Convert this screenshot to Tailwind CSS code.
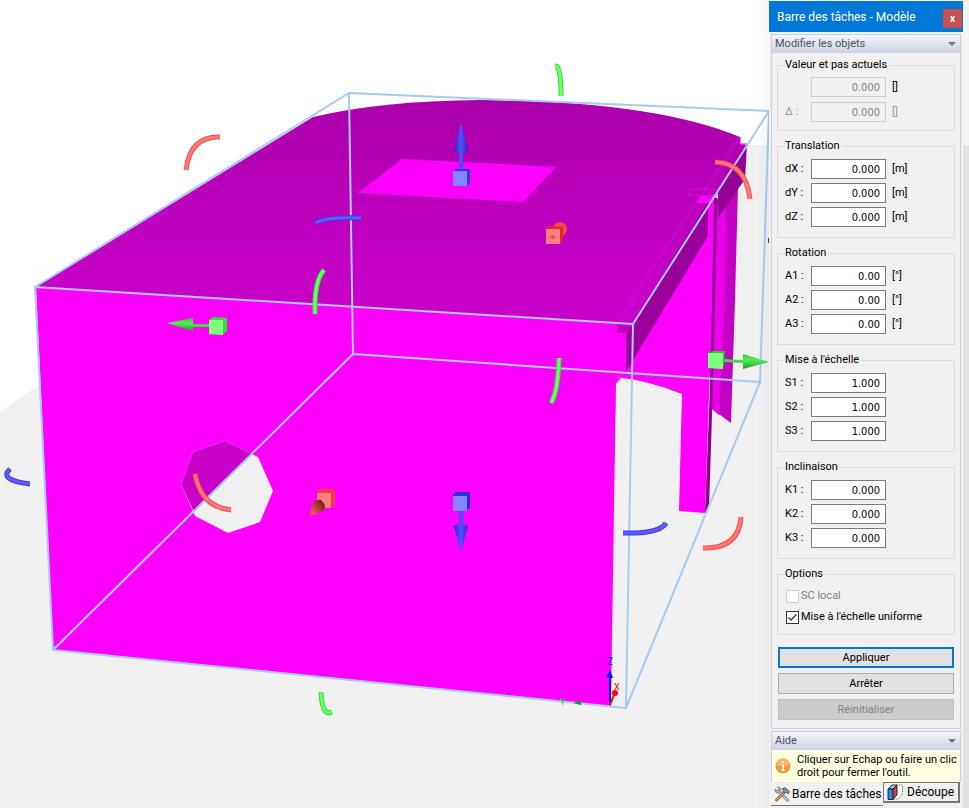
<!DOCTYPE html>
<html lang="fr">
<head>
    <meta charset="UTF-8">
    <meta name="viewport" content="width=device-width, initial-scale=1.0">
    <title>Barre des tâches - Modèle</title>
    <script src="https://cdn.jsdelivr.net/npm/@tailwindcss/browser@4"></script>
</head>
<body class="flex min-h-screen bg-white text-black text-[11px] leading-[14px] font-[Roboto,'Liberation_Sans',sans-serif]">

    <!-- 3D view -->
    <main class="flex-1 min-w-0">
        <svg class="block w-full h-auto" viewBox="0 0 769 808" role="img" aria-label="Vue 3D du modèle">
            <defs>
                <linearGradient id="roof" x1="0" y1="100" x2="0" y2="325" gradientUnits="userSpaceOnUse">
                    <stop offset="0" stop-color="#aa00aa"/>
                    <stop offset="0.5" stop-color="#bd00bd"/>
                    <stop offset="1" stop-color="#cb00cb"/>
                </linearGradient>
                <linearGradient id="edge" x1="0" x2="1">
                    <stop offset="0" stop-color="#000" stop-opacity="0"/>
                    <stop offset="1" stop-color="#000" stop-opacity="0.03"/>
                </linearGradient>
                <linearGradient id="blue" x1="0" x2="1">
                    <stop offset="0" stop-color="#2a2ac0"/>
                    <stop offset="0.5" stop-color="#5050ff"/>
                    <stop offset="1" stop-color="#2828c8"/>
                </linearGradient>
                <linearGradient id="green" x1="0" y1="0" x2="0" y2="1">
                    <stop offset="0" stop-color="#2acc2a"/>
                    <stop offset="0.4" stop-color="#55ee55"/>
                    <stop offset="1" stop-color="#22a022"/>
                </linearGradient>
                <linearGradient id="brown" x1="0" y1="1" x2="1" y2="0">
                    <stop offset="0.2" stop-color="#e05a50"/>
                    <stop offset="0.9" stop-color="#7a1a1a"/>
                </linearGradient>
            </defs>

            <!-- ground -->
            <path d="M0 412L60 370L700 145H769V808H0Z" fill="#f0f0f0"/>
            <path d="M0 300V412L345 170V90L36 287Z" fill="#fff"/>

            <!-- right side parts -->
            <path d="M735 160L740 160L738 187L735 300L731 423L712 409L700 240Z" fill="#c400c4"/>
            <path d="M717 200L726 190L725 300L719 415L712 409Z" fill="#ec00ec"/>
            <path d="M700 205L716 190L705 513L679 511L682 394Q650 381 616 377L611 600L600 400L627 372Z" fill="#f0f"/>
            <path d="M714 198H717.5L712 415L709 508L705 513L711 360Z" fill="#8c008c"/>

            <!-- front wall -->
            <path d="M36 287L633 324L633 378L616 377L611 706L53 650Z" fill="#f0f"/>

            <!-- roof -->
            <path d="M36 287L313 117Q380 101 480 100Q655 101 740 137L740 144L747 145L633 324Z" fill="url(#roof)"/>
            <path d="M747 145L745 179L718 218V190Z" fill="#940094"/>
            <path d="M708 202V236L626 372V334L633 324Z" fill="#9a009a"/>
            <path d="M617 323L633 324L626 333L617 333Z" fill="#c000c0"/>
            <path d="M702 195H716L711 203L696 203Z" fill="#f0f"/>
            <path d="M740 137V144H747M740 137L617 322M688 195L692 189L719 190L716 196Z" fill="none" stroke="#e600e6"/>
            <path d="M402 159L556 167L523 202L358 193Z" fill="#f0f"/>

            <!-- opening in the wall -->
            <path d="M225 441L258 457L273 491L260 522L228 533L195 516L181 484L193 452Z" fill="#f0f0f0"/>
            <path d="M225 441L252 454L194 512L181 484L193 452Z" fill="#c800c8"/>

            <!-- bounding box -->
            <path d="M35 287L349 93L769 111L760 382L626 708L53 650Z M35 287L633 324L626 708M633 324L769 111M349 93L353 354L53 650M353 354L760 382" fill="none" stroke="#a6caf0" stroke-width="2" stroke-linejoin="round"/>

            <!-- rotation handles -->
            <g fill="none" stroke-width="5">
                <path d="M186 170Q190 136 220 137M715 162Q746 163 750 199M195 474Q201 507 231 510M703 548Q739 549 741 517" stroke="#f05050"/>
                <path d="M186 170Q190 136 220 137M715 162Q746 163 750 199M195 474Q201 507 231 510M703 548Q739 549 741 517" stroke="#ff7878" stroke-width="3"/>
                <path d="M555 66Q561 65 561 96M324 270Q314 281 315 314M559 358Q558 392 551 403M321 692Q322 717 332 712" stroke="#3ddd3d"/>
                <path d="M555 66Q561 65 561 96M324 270Q314 281 315 314M559 358Q558 392 551 403M321 692Q322 717 332 712" stroke="#66ff66" stroke-width="3"/>
                <path d="M316 223Q324 217 361 218M10 469Q-2 480 30 484M623 533Q660 534 666 523" stroke="#3a3ad8"/>
                <path d="M316 223Q324 217 361 218M10 469Q-2 480 30 484M623 533Q660 534 666 523" stroke="#5c5cff" stroke-width="3"/>
            </g>
            <path d="M768 238h1v5h-1z" fill="#3333dd"/>

            <!-- translation and scale handles -->
            <path d="M459 150h4v22h-4zM461 123L468 151Q461 154 454 151Z" fill="url(#blue)"/>
            <path d="M453 171L456 169H470V183L467 186H453Z" fill="#3838dd"/>
            <path d="M453 171H467V186H453Z" fill="#8484ff"/>
            <path d="M453 495L456 492H470V507L467 511H453Z" fill="#3030cc"/>
            <path d="M453 496H467V511H453Z" fill="#8484ff"/>
            <path d="M459 511h4v16h-4zM454 526Q461 522 468 526L461 552Z" fill="url(#blue)"/>
            <path d="M167 323L193 318V331Z" fill="url(#green)"/>
            <path d="M193 324H209V327H193Z" fill="#40dd40"/>
            <path d="M209 320L213 317L227 318V331L222 335L209 334Z" fill="#33e033"/>
            <path d="M209 320H223V335L209 334Z" fill="#80ff80"/>
            <path d="M723 359L743 360V363L723 362Z" fill="#40dd40"/>
            <path d="M743 354L769 362L743 369Z" fill="url(#green)"/>
            <path d="M708 353L712 351H725L724 365L722 369L708 368Z" fill="#22cc22"/>
            <path d="M708 353H723V369L708 368Z" fill="#80ff80"/>
            <circle cx="560" cy="229" r="7" fill="#f44"/>
            <path d="M546 229L549 226L563 227V239L560 244H546Z" fill="#dc2828"/>
            <path d="M546 229H560V244H546Z" fill="#ff8080"/>
            <circle cx="553" cy="237" r="2" fill="#f44"/>
            <path d="M317 492L320 489H335V503L331 508H317Z" fill="#f33c3c"/>
            <path d="M317 493H331V508H317Z" fill="#ff8080"/>
            <path d="M310 516L312 505Q315 499 321 500Q327 505 324 511Z" fill="url(#brown)"/>

            <!-- coordinate system -->
            <path d="M609 705V677H606L610 670L613 678H611V705Z" fill="#00f"/>
            <path d="M610 705L614 695" stroke="#e00" stroke-width="2"/>
            <circle cx="615" cy="693" r="3" fill="#f00"/>
            <path d="M573 703L581 701V705Z" fill="#0a0"/>
            <text x="607" y="665" font-size="10" fill="#00f">Z</text>
            <text x="614" y="690" font-size="9" fill="#e00">X</text>
            <text x="560" y="705" font-size="9" fill="#0d0">Y</text>
            <path d="M757 0H769V808H757Z" fill="url(#edge)"/>
        </svg>
    </main>

    <!-- Task bar panel -->
    <aside class="flex flex-col w-[194px] shrink-0 mt-px bg-[#f0f0f0]">
        <header class="flex items-center justify-between h-[31px] pl-2 bg-[#0078d7] text-white">
            <h1 class="text-xs">Barre des tâches - Modèle</h1>
            <button type="button" aria-label="Fermer" class="w-[19px] h-[19px] mt-1 mr-px bg-[#c75050] text-[10px] font-bold leading-[18px]">x</button>
        </header>

        <section class="mt-0.5 mx-0.5 border border-[#c8cde2]">
            <h2 class="flex items-center justify-between h-[18px] pl-[3px] pr-1 bg-linear-to-b from-[#f4f5fa] to-[#cdd1e4] text-[#4a5160]">
                Modifier les objets
                <svg class="w-2 h-1" viewBox="0 0 8 4"><path d="M0 0H8L4 4Z" fill="#777"/></svg>
            </h2>
            <form class="flex flex-col gap-2 px-[5px] pt-[5px] pb-2">
                <fieldset class="min-w-0 border border-[#dcdcdc] px-[7px] pt-[5px] pb-2">
                    <legend class="pr-0.5">Valeur et pas actuels</legend>
                    <div class="flex flex-col gap-[5px] text-[#9a9a9a]">
                        <div class="flex items-center">
                            <label for="val" class="w-[26px]"></label>
                            <input id="val" aria-label="Valeur" disabled value="0.000" class="w-[75px] h-5 border border-[#ccc] pr-[5px] text-right font-['DejaVu_Sans_Condensed',sans-serif] text-[#808080]">
                            <span class="pl-1.5 text-black">[]</span>
                        </div>
                        <div class="flex items-center">
                            <label for="pas" class="w-[26px]">Δ :</label>
                            <input id="pas" disabled value="0.000" class="w-[75px] h-5 border border-[#ccc] pr-[5px] text-right font-['DejaVu_Sans_Condensed',sans-serif] text-[#808080]">
                            <span class="pl-1.5">[]</span>
                        </div>
                    </div>
                </fieldset>

                <fieldset class="min-w-0 border border-[#dcdcdc] px-[7px] pt-1.5 pb-2.5">
                    <legend class="pr-0.5">Translation</legend>
                    <div class="flex flex-col gap-1">
                        <div class="flex items-center">
                            <label for="dx" class="w-[26px]">dX :</label>
                            <input id="dx" value="0.000" class="w-[75px] h-5 border border-[#7a7a7a] bg-white pr-[5px] text-right font-['DejaVu_Sans_Condensed',sans-serif]">
                            <span class="pl-1.5">[m]</span>
                        </div>
                        <div class="flex items-center">
                            <label for="dy" class="w-[26px]">dY :</label>
                            <input id="dy" value="0.000" class="w-[75px] h-5 border border-[#7a7a7a] bg-white pr-[5px] text-right font-['DejaVu_Sans_Condensed',sans-serif]">
                            <span class="pl-1.5">[m]</span>
                        </div>
                        <div class="flex items-center">
                            <label for="dz" class="w-[26px]">dZ :</label>
                            <input id="dz" value="0.000" class="w-[75px] h-5 border border-[#7a7a7a] bg-white pr-[5px] text-right font-['DejaVu_Sans_Condensed',sans-serif]">
                            <span class="pl-1.5">[m]</span>
                        </div>
                    </div>
                </fieldset>

                <fieldset class="min-w-0 border border-[#dcdcdc] px-[7px] pt-1.5 pb-2.5">
                    <legend class="pr-0.5">Rotation</legend>
                    <div class="flex flex-col gap-1">
                        <div class="flex items-center">
                            <label for="a1" class="w-[26px]">A1 :</label>
                            <input id="a1" value="0.00" class="w-[75px] h-5 border border-[#7a7a7a] bg-white pr-[5px] text-right font-['DejaVu_Sans_Condensed',sans-serif]">
                            <span class="pl-1.5">[°]</span>
                        </div>
                        <div class="flex items-center">
                            <label for="a2" class="w-[26px]">A2 :</label>
                            <input id="a2" value="0.00" class="w-[75px] h-5 border border-[#7a7a7a] bg-white pr-[5px] text-right font-['DejaVu_Sans_Condensed',sans-serif]">
                            <span class="pl-1.5">[°]</span>
                        </div>
                        <div class="flex items-center">
                            <label for="a3" class="w-[26px]">A3 :</label>
                            <input id="a3" value="0.00" class="w-[75px] h-5 border border-[#7a7a7a] bg-white pr-[5px] text-right font-['DejaVu_Sans_Condensed',sans-serif]">
                            <span class="pl-1.5">[°]</span>
                        </div>
                    </div>
                </fieldset>

                <fieldset class="min-w-0 border border-[#dcdcdc] px-[7px] pt-1.5 pb-2.5">
                    <legend class="pr-0.5">Mise à l'échelle</legend>
                    <div class="flex flex-col gap-1">
                        <div class="flex items-center">
                            <label for="s1" class="w-[26px]">S1 :</label>
                            <input id="s1" value="1.000" class="w-[75px] h-5 border border-[#7a7a7a] bg-white pr-[5px] text-right font-['DejaVu_Sans_Condensed',sans-serif]">
                        </div>
                        <div class="flex items-center">
                            <label for="s2" class="w-[26px]">S2 :</label>
                            <input id="s2" value="1.000" class="w-[75px] h-5 border border-[#7a7a7a] bg-white pr-[5px] text-right font-['DejaVu_Sans_Condensed',sans-serif]">
                        </div>
                        <div class="flex items-center">
                            <label for="s3" class="w-[26px]">S3 :</label>
                            <input id="s3" value="1.000" class="w-[75px] h-5 border border-[#7a7a7a] bg-white pr-[5px] text-right font-['DejaVu_Sans_Condensed',sans-serif]">
                        </div>
                    </div>
                </fieldset>

                <fieldset class="min-w-0 border border-[#dcdcdc] px-[7px] pt-1.5 pb-2.5">
                    <legend class="pr-0.5">Inclinaison</legend>
                    <div class="flex flex-col gap-1">
                        <div class="flex items-center">
                            <label for="k1" class="w-[26px]">K1 :</label>
                            <input id="k1" value="0.000" class="w-[75px] h-5 border border-[#7a7a7a] bg-white pr-[5px] text-right font-['DejaVu_Sans_Condensed',sans-serif]">
                        </div>
                        <div class="flex items-center">
                            <label for="k2" class="w-[26px]">K2 :</label>
                            <input id="k2" value="0.000" class="w-[75px] h-5 border border-[#7a7a7a] bg-white pr-[5px] text-right font-['DejaVu_Sans_Condensed',sans-serif]">
                        </div>
                        <div class="flex items-center">
                            <label for="k3" class="w-[26px]">K3 :</label>
                            <input id="k3" value="0.000" class="w-[75px] h-5 border border-[#7a7a7a] bg-white pr-[5px] text-right font-['DejaVu_Sans_Condensed',sans-serif]">
                        </div>
                    </div>
                </fieldset>

                <fieldset class="min-w-0 border border-[#dcdcdc] px-[7px] pt-2 pb-2.5">
                    <legend class="pr-0.5">Options</legend>
                    <div class="flex flex-col gap-[7px] pl-px">
                        <label class="flex items-center gap-0.5 whitespace-nowrap text-[#838383]">
                            <input type="checkbox" disabled class="appearance-none w-[13px] h-[13px] border border-[#ccc] bg-white">
                            SC local
                        </label>
                        <label class="grid grid-cols-[13px_auto] justify-start items-center gap-0.5 whitespace-nowrap">
                            <input type="checkbox" checked class="peer appearance-none col-start-1 row-start-1 w-[13px] h-[13px] border border-[#333] bg-white">
                            <svg class="col-start-1 row-start-1 w-[13px] h-[13px] pointer-events-none invisible peer-checked:visible" viewBox="0 0 13 13"><path d="M2.500 6.500L5 9L10.500 3.500" fill="none" stroke="#333" stroke-width="1.4"/></svg>
                            <span>Mise à l'échelle uniforme</span>
                        </label>
                    </div>
                </fieldset>

                <div class="flex flex-col gap-[5px] px-px pt-1">
                    <button type="submit" class="h-[21px] border-2 border-[#0078d7] bg-[#e1e1e1]">Appliquer</button>
                    <button type="button" class="h-[21px] border border-[#adadad] bg-[#e1e1e1]">Arrêter</button>
                    <button type="button" disabled class="h-[21px] border border-[#bfbfbf] bg-[#ccc] text-[#838383]">Réinitialiser</button>
                </div>
            </form>
        </section>

        <section class="mt-0.5 mx-0.5 border border-b-0 border-[#c8cde2]">
            <h2 class="flex items-center justify-between h-[18px] pl-[3px] pr-1 bg-linear-to-b from-[#f4f5fa] to-[#cdd1e4] text-[#4a5160]">
                Aide
                <svg class="w-2 h-1" viewBox="0 0 8 4"><path d="M0 0H8L4 4Z" fill="#777"/></svg>
            </h2>
            <div class="flex items-center gap-1.5 h-8 pl-[3px] bg-[#ffffe1]">
                <svg class="w-4 h-4 shrink-0" viewBox="0 0 16 16">
                    <circle cx="8" cy="8" r="7.5" fill="#f39a34"/>
                    <path d="M1.500 7A6.500 6.500 0 0 1 14.500 7Q8 9 1.500 7Z" fill="#fab765"/>
                    <path d="M7 3h2v2H7zM6 6.500H9V12H10V13H6V12H7V7.500H6Z" fill="#fff"/>
                </svg>
                <p class="leading-[13px] whitespace-nowrap">Cliquer sur Echap ou faire un clic<br>droit pour fermer l'outil.</p>
            </div>
        </section>

        <nav class="flex items-start mx-0.5 text-xs whitespace-nowrap">
            <button type="button" class="flex items-center gap-0.5 w-[112px] h-[24px] pl-[3px] border-b border-[#777]">
                <svg class="w-4 h-4 shrink-0" viewBox="0 0 16 16">
                    <path d="M4.500 5L13.500 14" stroke="#6b7480" stroke-width="3" stroke-linecap="round"/>
                    <path d="M4.500 5L13.500 14" stroke="#c9d3e0" stroke-width="1.500" stroke-linecap="round"/>
                    <path d="M1 3L3 5L5 4.500L5 2.500L3.500 1Q7 1 7 4.500Q6 7.500 3 7Q0.500 6 1 3Z" fill="#b8c4d4" stroke="#6b7480" stroke-width="0.800"/>
                    <path d="M10.500 6L2.500 14" stroke="#7a4d1c" stroke-width="2.600" stroke-linecap="round"/>
                    <path d="M10.500 6L2.500 14" stroke="#e0a85c" stroke-width="1.200" stroke-linecap="round"/>
                    <path d="M8 3Q10.500 0.500 13 3L15.500 6L14 8L12 6L10.500 7L9 5.500L10 4Z" fill="#8793a3" stroke="#4b535e" stroke-width="0.800"/>
                </svg>
                Barre des tâches
            </button>
            <button type="button" class="flex items-center gap-1 h-[21px] pl-[3px] pr-1 border border-b-2 border-r-2 border-[#777]">
                <svg class="w-4 h-4 shrink-0" viewBox="0 0 16 16">
                    <path d="M9 1H15.500V10L11 15H6" fill="#fff" stroke="#555" stroke-width="0.800" stroke-dasharray="1.500 1"/>
                    <path d="M1 5L5 1H10L6 5Z" fill="#8ccbf5" stroke="#123" stroke-width="0.900"/>
                    <path d="M1 5H6V15.500H1Z" fill="#1e8ae0" stroke="#123" stroke-width="0.900"/>
                    <path d="M6 5L10 1V11L6 15.500Z" fill="#e83030" stroke="#123" stroke-width="0.900"/>
                </svg>
                Découpe
            </button>
        </nav>
    </aside>

    <div class="w-1.5 shrink-0 bg-linear-to-b from-[#f4f4f4] from-[145px] to-[#e2e2e2] to-[145px]"></div>

</body>
</html>
